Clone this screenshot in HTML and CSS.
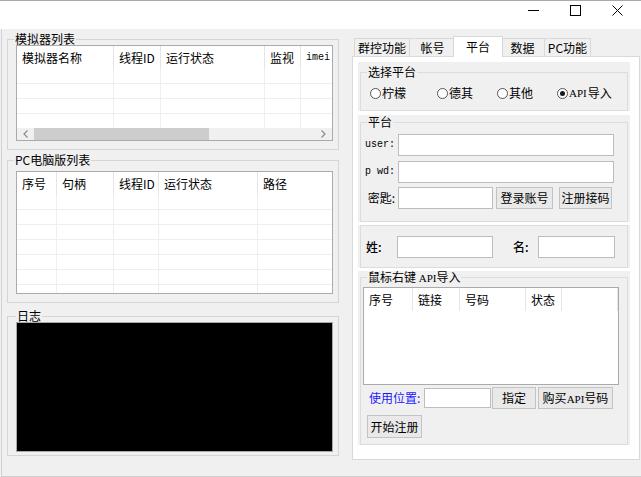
FILE: index.html
```html
<!DOCTYPE html>
<html lang="zh-CN">
<head>
<meta charset="utf-8">
<title>模拟器管理</title>
<link rel="stylesheet" href="styles.css">
</head>
<body>
<div class="window">
  <header class="titlebar">
    <span class="cbtn"><svg width="11" height="11" viewBox="0 0 11 11"><line x1="0" y1="5.5" x2="11" y2="5.5" stroke="#000" stroke-width="1"/></svg></span>
    <span class="cbtn"><svg width="11" height="11" viewBox="0 0 11 11"><rect x="0.5" y="0.5" width="10" height="10" fill="none" stroke="#000" stroke-width="1"/></svg></span>
    <span class="cbtn"><svg width="11" height="11" viewBox="0 0 11 11"><path d="M0.5 0.5L10.5 10.5M10.5 0.5L0.5 10.5" stroke="#000" stroke-width="1"/></svg></span>
  </header>
  <main class="client">
    <section class="leftcol">
      <fieldset class="group g-emu">
        <legend>模拟器列表</legend>
        <div class="lv lv-emu">
          <div class="lv-head cols-emu">
            <div class="hc">模拟器名称</div><div class="hc">线程ID</div><div class="hc">运行状态</div><div class="hc">监视</div><div class="hc mono">imei</div>
          </div>
          <div class="lv-body body-emu">
            <div class="lv-row cols-emu"><i></i><i></i><i></i><i></i><i></i></div>
            <div class="lv-row cols-emu"><i></i><i></i><i></i><i></i><i></i></div>
            <div class="lv-row cols-emu"><i></i><i></i><i></i><i></i><i></i></div>
            <div class="lv-row cols-emu"><i></i><i></i><i></i><i></i><i></i></div>
          </div>
          <div class="hscroll">
            <span class="sb-btn"><svg width="5" height="8" viewBox="0 0 5 8"><polyline points="4.5,0.5 1,4 4.5,7.5" fill="none" stroke="#8a8a8a" stroke-width="1.2"/></svg></span>
            <span class="sb-thumb"></span>
            <span class="sb-track"></span>
            <span class="sb-btn"><svg width="5" height="8" viewBox="0 0 5 8"><polyline points="0.5,0.5 4,4 0.5,7.5" fill="none" stroke="#8a8a8a" stroke-width="1.2"/></svg></span>
          </div>
        </div>
      </fieldset>

      <fieldset class="group g-pc">
        <legend>PC电脑版列表</legend>
        <div class="lv lv-pc">
          <div class="lv-head cols-pc">
            <div class="hc">序号</div><div class="hc">句柄</div><div class="hc">线程ID</div><div class="hc">运行状态</div><div class="hc">路径</div>
          </div>
          <div class="lv-body body-pc">
            <div class="lv-row cols-pc"><i></i><i></i><i></i><i></i><i></i></div>
            <div class="lv-row cols-pc"><i></i><i></i><i></i><i></i><i></i></div>
            <div class="lv-row cols-pc"><i></i><i></i><i></i><i></i><i></i></div>
            <div class="lv-row cols-pc"><i></i><i></i><i></i><i></i><i></i></div>
            <div class="lv-row cols-pc"><i></i><i></i><i></i><i></i><i></i></div>
            <div class="lv-row cols-pc"><i></i><i></i><i></i><i></i><i></i></div>
            <div class="lv-row cols-pc"><i></i><i></i><i></i><i></i><i></i></div>
          </div>
        </div>
      </fieldset>

      <fieldset class="group g-log">
        <legend>日志</legend>
        <div class="log"></div>
      </fieldset>
    </section>

    <section class="rightcol">
      <nav class="tabs">
        <div class="tab t1">群控功能</div>
        <div class="tab t2">帐号</div>
        <div class="tab t3 active">平台</div>
        <div class="tab t4">数据</div>
        <div class="tab t5">PC功能</div>
      </nav>
      <div class="panel">
        <div class="frame f1">
          <fieldset class="pgroup">
            <legend>选择平台</legend>
            <div class="gbody radios">
              <label class="radio"><span class="rdot"></span>柠檬</label>
              <label class="radio"><span class="rdot"></span>德其</label>
              <label class="radio"><span class="rdot"></span>其他</label>
              <label class="radio"><span class="rdot on"></span><span class="api">API</span>导入</label>
            </div>
          </fieldset>
        </div>

        <div class="frame f2">
          <fieldset class="pgroup">
            <legend>平台</legend>
            <div class="gbody form">
              <div class="frow"><span class="flabel mono-s">user:</span><input class="inp w-long" type="text"></div>
              <div class="frow r2"><span class="flabel mono-s">p wd:</span><input class="inp w-long" type="text"></div>
              <div class="frow r3"><span class="flabel">密匙:</span><input class="inp w-key" type="text"><button class="btn b-login">登录账号</button><button class="btn b-reg">注册接码</button></div>
            </div>
          </fieldset>
        </div>

        <div class="frame f3">
          <div class="box">
            <span class="nlabel">姓:</span><input class="inp w-first" type="text">
            <span class="nlabel n2">名:</span><input class="inp w-last" type="text">
          </div>
        </div>

        <div class="frame f4">
          <fieldset class="pgroup">
            <legend>鼠标右键 <span class="api">API</span>导入</legend>
            <div class="gbody apibody">
              <div class="lv lv-api">
                <div class="lv-head cols-api">
                  <div class="hc">序号</div><div class="hc">链接</div><div class="hc">号码</div><div class="hc">状态</div><div class="hc last"></div>
                </div>
                <div class="lv-body body-api"></div>
              </div>
              <div class="arow">
                <span class="blue">使用位置:</span><input class="inp w-pos" type="text"><button class="btn b-set">指定</button><button class="btn b-buy">购买<span class="api">API</span>号码</button>
              </div>
              <div class="arow r-start">
                <button class="btn b-start">开始注册</button>
              </div>
            </div>
          </fieldset>
        </div>
      </div>
    </section>
  </main>
</div>
</body>
</html>
```

FILE: styles.css
```css
* { box-sizing: border-box; }
html, body { margin: 0; padding: 0; }
body {
  width: 641px;
  height: 477px;
  overflow: hidden;
  background: #f0f0f0;
  font-family: "Noto Sans CJK SC", "Liberation Sans", sans-serif;
  font-size: 12px;
  line-height: 14px;
  color: #000;
}
.window {
  width: 641px;
  height: 477px;
  display: flex;
  flex-direction: column;
  background: #f0f0f0;
}

/* title bar */
.titlebar {
  height: 29px;
  flex: none;
  background: #fff;
  border-top: 1px solid #a9a9a9;
  display: flex;
  justify-content: flex-end;
  padding-right: 3px;
}
.cbtn {
  width: 42px;
  height: 19px;
  display: flex;
  align-items: center;
  justify-content: center;
}
.cbtn svg { display: block; }

/* client */
.client {
  flex: 1;
  display: flex;
  margin-left: 1px;
  border-left: 1px solid #d2d2d2;
  border-bottom: 1px solid #cfcfcf;
}
.leftcol {
  width: 337px;
  padding: 4px 0 0 5px;
  display: flex;
  flex-direction: column;
}

/* group boxes */
.group {
  margin: 0;
  width: 332px;
  min-width: 0;
  border: 1px solid #d5d5d5;
}
.group > legend, .pgroup > legend {
  padding: 0 1px;
  margin-left: 6px;
  font-size: 12px;
  line-height: 12px;
  height: 12px;
  white-space: nowrap;
}
.group > legend { margin-left: -2px; }
.g-emu { padding: 0 5px 8px 8px; }
.g-pc { padding: 5px 5px 8px 8px; margin-top: 4px; }
.g-log { padding: 0 5px 3px 8px; margin-top: 7px; }
.g-log > legend { margin-left: 0; }

/* list views */
.lv {
  border: 1px solid #ababab;
  background: #fff;
  display: flex;
  flex-direction: column;
}
.lv-emu { height: 96px; }
.lv-pc { height: 123px; }
.lv-api { height: 98px; }
.lv-head {
  display: grid;
  height: 23px;
  flex: none;
}
.hc {
  border-right: 1px solid #e5e5e5;
  padding: 3px 0 0 5px;
  line-height: 17px;
  white-space: nowrap;
  overflow: hidden;
}
.lv-head .hc:last-child { border-right: none; }
.lv-api .lv-head .hc.last { border-right: 1px solid #e5e5e5; }
.mono { font-family: "Liberation Mono", monospace; font-size: 10px; }
.cols-emu { display: grid; grid-template-columns: 97px 47px 104px 36px 1fr; }
.cols-pc { display: grid; grid-template-columns: 40px 57px 45px 99px 1fr; }
.cols-api { display: grid; grid-template-columns: 49px 47px 66px 36px 1fr; }
.lv-body { overflow: hidden; flex: none; }
.body-emu { height: 59px; }
.body-pc { height: 98px; }
.body-api { height: 73px; }
.lv-row {
  height: 15px;
  border-bottom: 1px solid #efefef;
}
.lv-row i { display: block; border-right: 1px solid #efefef; }
.lv-row i:last-child { border-right: none; }

.hscroll {
  height: 12px;
  flex: none;
  display: flex;
  background: #f0f0f0;
}
.sb-btn {
  width: 17px;
  display: flex;
  align-items: center;
  justify-content: center;
}
.sb-thumb { width: 175px; background: #cdcdcd; }
.sb-track { flex: 1; }

.log {
  height: 130px;
  background: #000;
  border: 1px solid #a9a9a9;
}

/* right column / tabs */
.rightcol {
  margin-left: 13px;
  padding-top: 7px;
  display: flex;
  flex-direction: column;
}
.tabs {
  display: flex;
  align-items: flex-end;
  height: 20px;
  padding-left: 2px;
  position: relative;
  z-index: 1;
}
.tab {
  height: 18px;
  border: 1px solid #d9d9d9;
  border-bottom: none;
  background: #f0f0f0;
  margin-right: -1px;
  display: flex;
  align-items: center;
  justify-content: center;
  white-space: nowrap;
}
.tab.active {
  height: 21px;
  margin-bottom: -1px;
  margin-left: -2px;
  margin-right: -3px;
  background: #fff;
  position: relative;
  z-index: 1;
}
.t1 { width: 56px; }
.t2 { width: 47px; }
.t3 { width: 50px; }
.t4 { width: 45px; }
.t5 { width: 47px; }

.panel {
  width: 288px;
  height: 404px;
  background: #fff;
  border: 1px solid #d9d9d9;
  padding: 5px 0 0 5px;
  display: flex;
  flex-direction: column;
}
.frame {
  width: 272px;
  background: #f0f0f0;
  padding: 0 2px;
}
.f1 { padding-top: 4px; }
.f2 { margin-top: 4px; padding-top: 1px; }
.f3 { margin-top: 3px; }
.f4 { margin-top: 3px; }
.pgroup {
  margin: 0;
  padding: 0;
  min-width: 0;
  border: 1px solid #dcdcdc;
}

/* radios */
.radios {
  padding: 9px 0 11px 9px;
  display: grid;
  grid-template-columns: 67px 60px 60px 1fr;
  align-items: center;
}
.radio {
  display: flex;
  align-items: center;
  gap: 1px;
  height: 12px;
  white-space: nowrap;
}
.rdot {
  width: 11px;
  height: 11px;
  border: 1px solid #555;
  border-radius: 50%;
  background: #fff;
  display: flex;
  align-items: center;
  justify-content: center;
  flex: none;
}
.rdot.on::after {
  content: "";
  width: 5px;
  height: 5px;
  border-radius: 50%;
  background: #1a1a1a;
}
.api { font-family: "Liberation Serif", serif; font-size: 11px; }

/* platform form */
.form { padding: 6px 0 12px 0; }
.frow {
  display: flex;
  align-items: center;
  height: 22px;
}
.frow.r2 { margin-top: 5px; }
.frow.r3 { margin-top: 4px; }
.flabel {
  width: 34px;
  margin-right: 3px;
  text-align: right;
  white-space: nowrap;
}
.mono-s { font-family: "Liberation Mono", monospace; font-size: 10px; }
.inp {
  margin: 0;
  padding: 0;
  height: 22px;
  border: 1px solid #bdbdbd;
  background: #fff;
  border-radius: 0;
  outline: none;
  font: inherit;
}
.w-long { width: 216px; }
.w-key { width: 95px; }
.btn {
  margin: 0;
  padding: 0;
  height: 22px;
  background: #e9e9e9;
  border: 1px solid #c3c3c3;
  border-radius: 0;
  font-family: "Noto Sans CJK SC", "Liberation Sans", sans-serif;
  font-size: 12px;
  line-height: 14px;
  color: #000;
  white-space: nowrap;
}
.b-login { width: 57px; margin-left: 3px; }
.b-reg { width: 53px; margin-left: 6px; }

/* name box */
.box {
  border: 1px solid #dcdcdc;
  padding: 10px 0 9px 5px;
  display: flex;
  align-items: center;
}
.nlabel { width: 31px; font-weight: 500; white-space: nowrap; }
.nlabel.n2 { width: 25px; margin-left: 20px; }
.w-first { width: 96px; }
.w-last { width: 77px; }

/* api import */
.apibody { padding: 4px 8px 6px 2px; }
.arow {
  display: flex;
  align-items: center;
  height: 22px;
  margin-top: 2px;
}
.arow.r-start { margin-top: 6px; height: 23px; }
.blue { color: #1a1aff; width: 55px; margin-left: 6px; white-space: nowrap; }
.w-pos { width: 67px; height: 20px; }
.b-set { width: 44px; margin-left: 1px; }
.b-buy { width: 75px; margin-left: 2px; }
.b-start { width: 55px; height: 23px; margin-left: 4px; }
```
